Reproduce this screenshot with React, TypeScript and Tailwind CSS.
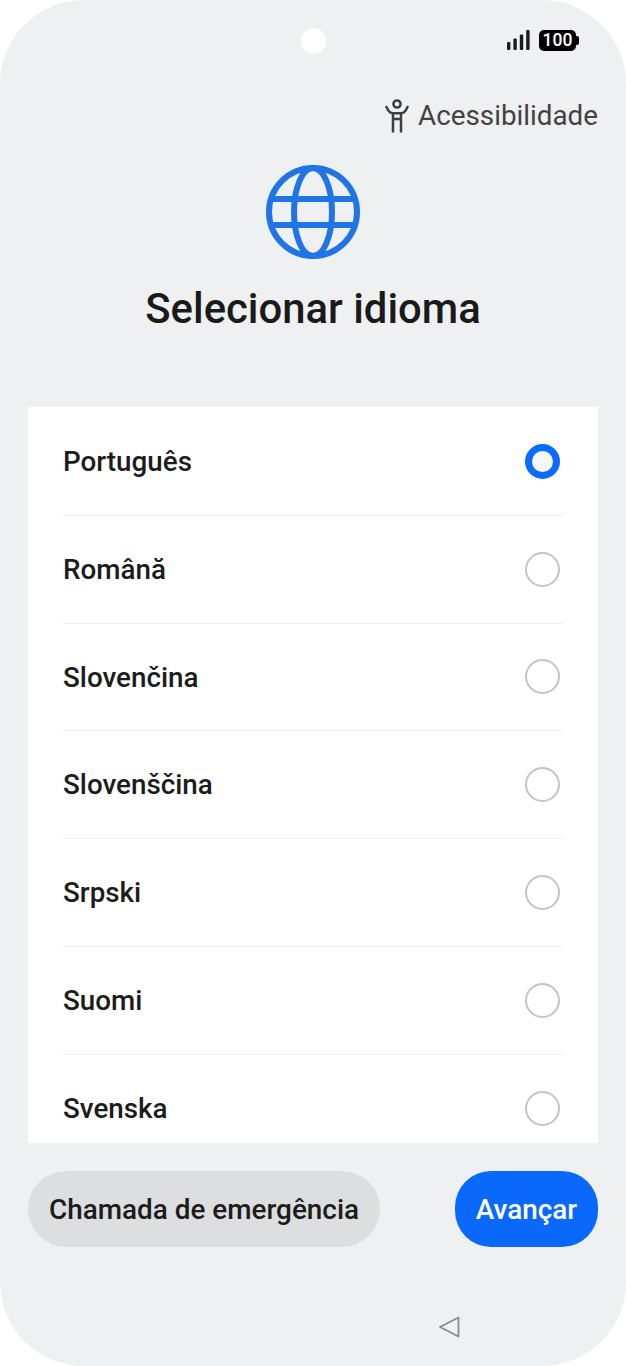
import React from "react";

const languages = ["Português", "Română", "Slovenčina", "Slovenščina", "Srpski", "Suomi", "Svenska"];

function Radio({ selected }: { selected: boolean }) {
  if (selected) {
    return <span className="block h-[35px] w-[35px] rounded-full border-[7px] border-[#0a6cff] bg-[#f8f8f8]" />;
  }
  return <span className="block h-[35px] w-[35px] rounded-full border-2 border-[#c4c4c4] bg-white" />;
}

export default function App() {
  return (
    <div className="h-[1366px] w-[626px] overflow-hidden bg-white font-['Roboto',sans-serif]">
      <div className="relative flex h-[1366px] w-[626px] flex-col rounded-[84px] bg-[#eff0f2]">
        <div className="absolute left-[301px] top-[28px] h-[26px] w-[25px] rounded-full bg-white" />

        <div className="flex h-[55px] items-end justify-end pr-[50px]">
          <div className="flex items-center gap-[8px] pb-[4px]">
            <svg width="24" height="22" viewBox="0 0 24 22" fill="#1c1c1c">
              <rect x="0" y="13" width="3.4" height="8" rx="1" />
              <rect x="6.400" y="9.500" width="3.4" height="11.5" rx="1" />
              <rect x="12.800" y="5.500" width="3.4" height="15.5" rx="1" />
              <rect x="19.200" y="1" width="3.4" height="20" rx="1" />
            </svg>
            <div className="relative flex h-[21px] w-[37px] items-center justify-center rounded-[5px] bg-black pt-[2px] text-[17.5px] font-medium leading-none text-white">
              100
              <span className="absolute right-[-2.5px] top-[6px] h-[9px] w-[3px] rounded-r-[2px] bg-black" />
            </div>
          </div>
        </div>

        <div className="mt-[44px] flex items-center justify-end gap-[9px] pr-[28px]">
          <svg width="24" height="34" viewBox="0 0 24 34" fill="none" stroke="#3f3f3f" strokeWidth="2.5">
            <circle cx="12" cy="5" r="3.6" />
            <path d="M1.500 8 C3 11.500 5.500 14.300 8 14.300 H16 C18.500 14.300 21 11.500 22.500 8" strokeLinecap="round" />
            <path d="M8 14 V33.500 M16 14 V33.500 M8 20 H16" />
          </svg>
          <span className="text-[27.8px] leading-[34px] text-[#424242]">Acessibilidade</span>
        </div>

        <div className="mt-[32px] flex justify-center">
          <svg width="94" height="94" viewBox="0 0 94 94" fill="none" stroke="#1f75e6" strokeWidth="6">
            <circle cx="47" cy="47" r="44" />
            <ellipse cx="47" cy="47" rx="19" ry="44" />
            <path d="M6 34 H88 M6 60 H88" />
          </svg>
        </div>

        <h1 className="mt-[23px] text-center text-[41.8px] font-medium leading-[54px] text-[#1a1a1a]">Selecionar idioma</h1>

        <div className="mx-[28px] mt-[71px] h-[736px] overflow-hidden bg-white pt-[1px]">
          {languages.map((name, i) => (
            <div key={name} className="mx-[35px] flex h-[107.8px] items-center justify-between border-b border-[#eeeeee] pr-[3px]">
              <span className="pt-[1px] text-[27.8px] font-medium text-[#1c1c1c]">{name}</span>
              <Radio selected={i === 0} />
            </div>
          ))}
        </div>

        <div className="mx-[28px] mt-[28px] flex justify-between">
          <div className="flex h-[76px] w-[352px] items-center justify-center rounded-[38px] bg-[#dddee0] pt-[2px] text-[27.9px] font-medium text-[#1c1c1c]">
            Chamada de emergência
          </div>
          <div className="flex h-[76px] w-[143px] items-center justify-center rounded-[36px] bg-[#0a69fb] pt-[2px] text-[27.9px] font-medium text-white">
            Avançar
          </div>
        </div>

        <div className="mt-[68px] flex justify-start pl-[438px]">
          <svg width="24" height="24" viewBox="0 0 24 24" fill="none" stroke="#8c8c8c" strokeWidth="1.800" strokeLinejoin="round">
            <path d="M2 12 L20.500 2.500 V21.500 Z" />
          </svg>
        </div>
      </div>
    </div>
  );
}
